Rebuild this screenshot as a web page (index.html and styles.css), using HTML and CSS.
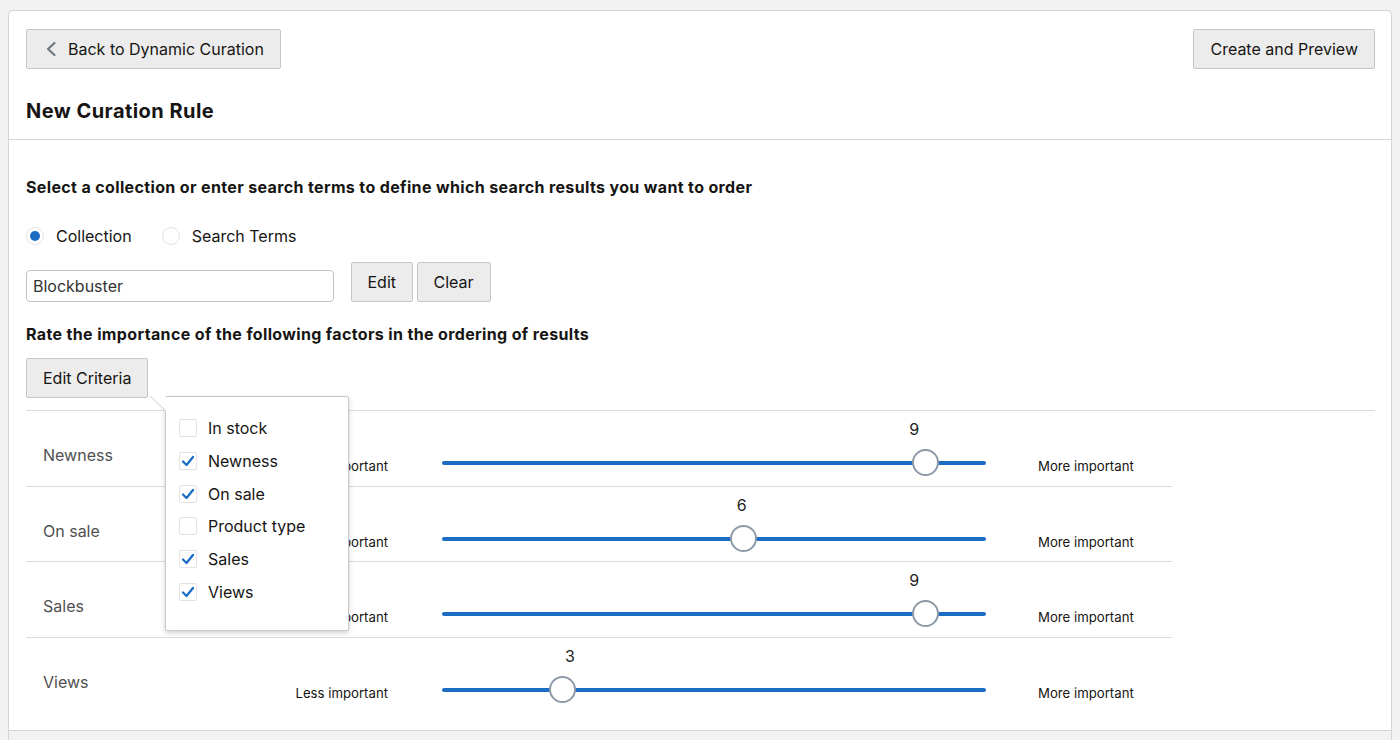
FILE: index.html
```html
<!DOCTYPE html>
<html lang="en">
<head>
<meta charset="utf-8">
<title>New Curation Rule</title>
<link rel="stylesheet" href="styles.css">
</head>
<body>
<div class="card">
  <header class="head">
    <div class="toolbar">
      <button class="btn btn-back" type="button">
        <svg class="chev" width="12" height="16" viewBox="0 0 12 16" aria-hidden="true"><polyline points="9.5,2 3,8 9.5,14" fill="none" stroke="#6e7883" stroke-width="2.2" stroke-linecap="round" stroke-linejoin="round"/></svg>
        Back to Dynamic Curation
      </button>
      <button class="btn" type="button">Create and Preview</button>
    </div>
    <h1 class="title">New Curation Rule</h1>
  </header>

  <section class="main">
    <h2 class="sub">Select a collection or enter search terms to define which search results you want to order</h2>
    <div class="radios">
      <label class="radio"><span class="dot on"></span>Collection</label>
      <label class="radio"><span class="dot"></span>Search Terms</label>
    </div>
    <div class="collection-row">
      <div class="text-input">Blockbuster</div>
      <button class="btn btn-edit" type="button">Edit</button>
      <button class="btn btn-clear" type="button">Clear</button>
    </div>

    <h2 class="sub sub2">Rate the importance of the following factors in the ordering of results</h2>
    <div class="criteria-bar">
      <button class="btn" type="button">Edit Criteria</button>
      <div class="popover">
        <svg class="pointer" width="18" height="16" viewBox="0 0 18 16" aria-hidden="true"><polygon points="1,0 17,0 17,15" fill="#fff"/><line x1="1" y1="0" x2="16" y2="14" stroke="#c9c9c9" stroke-width="1"/></svg>
        <ul class="checks">
          <li><span class="box"></span>In stock</li>
          <li><span class="box"><svg viewBox="0 0 18 18" width="18" height="18"><polyline points="4,9.5 7.5,13 14,5" fill="none" stroke="#1b6cc2" stroke-width="2.3" stroke-linecap="round" stroke-linejoin="round"/></svg></span>Newness</li>
          <li><span class="box"><svg viewBox="0 0 18 18" width="18" height="18"><polyline points="4,9.5 7.5,13 14,5" fill="none" stroke="#1b6cc2" stroke-width="2.3" stroke-linecap="round" stroke-linejoin="round"/></svg></span>On sale</li>
          <li><span class="box"></span>Product type</li>
          <li><span class="box"><svg viewBox="0 0 18 18" width="18" height="18"><polyline points="4,9.5 7.5,13 14,5" fill="none" stroke="#1b6cc2" stroke-width="2.3" stroke-linecap="round" stroke-linejoin="round"/></svg></span>Sales</li>
          <li><span class="box"><svg viewBox="0 0 18 18" width="18" height="18"><polyline points="4,9.5 7.5,13 14,5" fill="none" stroke="#1b6cc2" stroke-width="2.3" stroke-linecap="round" stroke-linejoin="round"/></svg></span>Views</li>
        </ul>
      </div>
    </div>

    <div class="criteria">
      <div class="row">
        <div class="name">Newness</div>
        <div class="less">Less important</div>
        <div class="slider">
          <span class="val" style="left:86.8%">9</span>
          <span class="track"></span>
          <span class="thumb" style="left:88.9%"></span>
        </div>
        <div class="more">More important</div>
      </div>
      <div class="row">
        <div class="name">On sale</div>
        <div class="less">Less important</div>
        <div class="slider">
          <span class="val" style="left:55.1%">6</span>
          <span class="track"></span>
          <span class="thumb" style="left:55.5%"></span>
        </div>
        <div class="more">More important</div>
      </div>
      <div class="row">
        <div class="name">Sales</div>
        <div class="less">Less important</div>
        <div class="slider">
          <span class="val" style="left:86.8%">9</span>
          <span class="track"></span>
          <span class="thumb" style="left:88.9%"></span>
        </div>
        <div class="more">More important</div>
      </div>
      <div class="row last">
        <div class="name">Views</div>
        <div class="less">Less important</div>
        <div class="slider">
          <span class="val" style="left:23.5%">3</span>
          <span class="track"></span>
          <span class="thumb" style="left:22.2%"></span>
        </div>
        <div class="more">More important</div>
      </div>
    </div>
  </section>
  <footer class="foot"></footer>
</div>
</body>
</html>
```

FILE: styles.css
```css
* { box-sizing: border-box; }
html, body { margin: 0; padding: 0; }
body {
  background: #f2f2f2;
  font-family: Inter, "Liberation Sans", Arial, sans-serif;
  color: #161513;
  height: 740px;
  overflow: hidden;
}
.card {
  margin: 10px 8px 0;
  background: #fff;
  border: 1px solid #d4d4d4;
  border-radius: 5px;
  overflow: hidden;
}
.head {
  padding: 18px 16px 16px 17px;
  border-bottom: 1px solid #d4d4d4;
}
.toolbar {
  display: flex;
  justify-content: space-between;
}
.btn {
  font-family: inherit;
  font-size: 16px;
  color: #161513;
  background: #ececec;
  border: 1px solid #c6c6c6;
  border-radius: 2px;
  height: 40px;
  padding: 0 16px;
  display: inline-flex;
  align-items: center;
  cursor: pointer;
}
.btn-back { padding-left: 18px; }
.chev { margin-right: 11px; }
.title {
  margin: 30px 0 0;
  font-size: 20px;
  line-height: 24px;
  font-weight: 700;
  letter-spacing: 0.45px;
}
.main {
  padding: 37px 16px 0 17px;
  position: relative;
}
.sub {
  margin: 0;
  font-size: 16px;
  line-height: 20px;
  font-weight: 700;
  letter-spacing: 0.36px;
}
.radios {
  display: flex;
  margin-top: 27px;
  height: 24px;
  align-items: center;
  font-size: 16px;
}
.radio {
  display: inline-flex;
  align-items: center;
  margin-right: 30px;
}
.dot {
  width: 18px;
  height: 18px;
  border-radius: 50%;
  border: 1px solid #e1e1e1;
  margin-right: 12px;
  position: relative;
}
.dot.on::after {
  content: "";
  position: absolute;
  left: 3px;
  top: 3px;
  width: 10px;
  height: 10px;
  border-radius: 50%;
  background: #1b6cc2;
}
.collection-row {
  display: flex;
  align-items: flex-end;
  margin-top: 14px;
}
.text-input {
  width: 308px;
  height: 32px;
  border: 1px solid #c4c4c4;
  border-radius: 4px;
  font-size: 16px;
  color: #333;
  padding-left: 6px;
  display: flex;
  align-items: center;
}
.btn-edit { margin-left: 17px; padding: 0 15.5px; }
.btn-clear { margin-left: 4px; padding: 0 16px; }
.sub2 { margin-top: 22px; }
.criteria-bar {
  margin-top: 14px;
  position: relative;
  height: 40px;
}
.popover {
  position: absolute;
  left: 139px;
  top: 38px;
  width: 184px;
  height: 235px;
  background: #fff;
  border: 1px solid #c9c9c9;
  border-radius: 2px;
  box-shadow: 0 2px 5px rgba(0,0,0,0.18);
  z-index: 5;
}
.pointer {
  position: absolute;
  left: -17px;
  top: -1px;
}
.checks {
  list-style: none;
  margin: 0;
  padding: 15px 0 0 13px;
}
.checks li {
  height: 32.7px;
  display: flex;
  align-items: center;
  font-size: 16px;
}
.box {
  width: 18px;
  height: 18px;
  border: 1px solid #e3e3e3;
  border-radius: 2px;
  margin-right: 11px;
  display: inline-flex;
  position: relative;
}
.box svg { position: absolute; left: -1px; top: -1px; }
.criteria {
  margin-top: 12px;
  border-top: 1px solid #dcdcdc;
}
.row {
  width: 1146px;
  height: 75.5px;
  border-bottom: 1px solid #dcdcdc;
  display: flex;
  align-items: flex-start;
}
.row.last { border-bottom: none; height: 92px; }
.name {
  width: 250px;
  padding-left: 17px;
  margin-top: 33px;
  font-size: 16px;
  line-height: 22px;
  color: #505050;
}
.less {
  width: 112px;
  text-align: right;
  font-size: 13.2px;
  line-height: 16px;
  margin-top: 47px;
}
.slider {
  width: 544px;
  height: 66px;
  margin-left: 54px;
  margin-top: 1px;
  position: relative;
}
.track {
  position: absolute;
  left: 0;
  right: 0;
  top: 49px;
  height: 4px;
  border-radius: 2px;
  background: #1b6cc2;
}
.thumb {
  position: absolute;
  top: 37px;
  width: 27px;
  height: 27px;
  margin-left: -13.5px;
  border-radius: 50%;
  background: #fff;
  border: 2px solid #8d9aa8;
}
.val {
  position: absolute;
  top: 7px;
  font-size: 16px;
  line-height: 20px;
  transform: translateX(-50%);
  color: #222;
}
.more {
  margin-left: 52px;
  font-size: 13.2px;
  line-height: 16px;
  margin-top: 47px;
}
.foot {
  height: 40px;
  background: #f2f2f2;
  border-top: 1px solid #d4d4d4;
}
```
